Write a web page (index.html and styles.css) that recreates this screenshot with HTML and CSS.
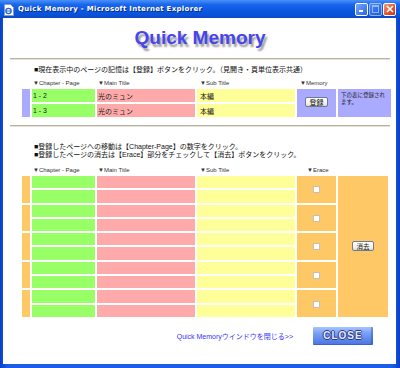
FILE: index.html
```html
<!DOCTYPE html>
<html lang="ja">
<head>
  <meta charset="UTF-8" />
  <title>Quick Memory</title>
  <link rel="stylesheet" href="styles.css">
</head>
<body>
  <div class="window">
    <div class="titlebar">
      <svg class="ie-icon" width="10" height="12" viewBox="0 0 10 12">
        <path d="M0.5 0.5h6l3 3v8h-9z" fill="#fff" stroke="#8a9ab8" stroke-width="1"/>
        <circle cx="4.5" cy="7" r="2.6" fill="none" stroke="#2a62d8" stroke-width="1.4"/>
        <path d="M2 7h5" stroke="#2a62d8" stroke-width="1"/>
      </svg>
      <span class="title-text">Quick Memory - Microsoft Internet Explorer</span>
      <div class="controls">
        <span class="ctl min"><i></i></span>
        <span class="ctl max off"><i></i></span>
        <span class="ctl close">
          <svg width="8" height="8" viewBox="0 0 8 8"><path d="M1 1L7 7M7 1L1 7" stroke="#fff" stroke-width="1.6"/></svg>
        </span>
      </div>
    </div>

    <div class="content">
      <h1>Quick Memory</h1>
      <hr>

      <p class="lead one">■現在表示中のページの記憶は【登録】ボタンをクリック。（見開き・頁単位表示共通）</p>

      <table class="memo top">
        <colgroup>
          <col style="width:8px"><col style="width:63px"><col style="width:98px">
          <col style="width:98px"><col style="width:39px"><col style="width:53px">
        </colgroup>
        <tr class="head">
          <td></td>
          <td>▼Chapter - Page</td>
          <td>▼Main Title</td>
          <td class="pad">▼Sub Title</td>
          <td class="pad">▼Memory</td>
          <td></td>
        </tr>
        <tr class="row">
          <td class="purple" rowspan="2"></td>
          <td class="green">1 - 2</td>
          <td class="pink">光のミュン</td>
          <td class="yellow">本編</td>
          <td class="purple center" rowspan="2"><button class="small-btn">登録</button></td>
          <td class="purple note" rowspan="2">下の表に登録されます。</td>
        </tr>
        <tr class="row">
          <td class="green">1 - 3</td>
          <td class="pink">光のミュン</td>
          <td class="yellow">本編</td>
        </tr>
      </table>

      <hr>

      <p class="lead two">■登録したページへの移動は【Chapter-Page】の数字をクリック。<br>■登録したページの消去は【Erace】部分をチェックして【消去】ボタンをクリック。</p>

      <table class="memo list">
        <colgroup>
          <col style="width:8px"><col style="width:63px"><col style="width:98px">
          <col style="width:98px"><col style="width:39px"><col style="width:50px">
        </colgroup>
        <tr class="head">
          <td></td>
          <td>▼Chapter - Page</td>
          <td>▼Main Title</td>
          <td class="pad">▼Sub Title</td>
          <td class="erace-head">▼Erace</td>
          <td></td>
        </tr>
        <tr class="row">
          <td class="orange" rowspan="2"></td><td class="green"></td><td class="pink"></td><td class="yellow"></td>
          <td class="orange center" rowspan="2"><input type="checkbox" class="check"></td>
          <td class="orange center" rowspan="10"><button class="small-btn erase">消去</button></td>
        </tr>
        <tr class="row"><td class="green"></td><td class="pink"></td><td class="yellow"></td></tr>
        <tr class="row">
          <td class="orange" rowspan="2"></td><td class="green"></td><td class="pink"></td><td class="yellow"></td>
          <td class="orange center" rowspan="2"><input type="checkbox" class="check"></td>
        </tr>
        <tr class="row"><td class="green"></td><td class="pink"></td><td class="yellow"></td></tr>
        <tr class="row">
          <td class="orange" rowspan="2"></td><td class="green"></td><td class="pink"></td><td class="yellow"></td>
          <td class="orange center" rowspan="2"><input type="checkbox" class="check"></td>
        </tr>
        <tr class="row"><td class="green"></td><td class="pink"></td><td class="yellow"></td></tr>
        <tr class="row">
          <td class="orange" rowspan="2"></td><td class="green"></td><td class="pink"></td><td class="yellow"></td>
          <td class="orange center" rowspan="2"><input type="checkbox" class="check"></td>
        </tr>
        <tr class="row"><td class="green"></td><td class="pink"></td><td class="yellow"></td></tr>
        <tr class="row">
          <td class="orange" rowspan="2"></td><td class="green"></td><td class="pink"></td><td class="yellow"></td>
          <td class="orange center" rowspan="2"><input type="checkbox" class="check"></td>
        </tr>
        <tr class="row"><td class="green"></td><td class="pink"></td><td class="yellow"></td></tr>
      </table>

      <div class="footer">
        <a class="close-link" href="#">Quick Memoryウインドウを閉じる&gt;&gt;</a>
        <button class="close-btn">CLOSE</button>
      </div>
    </div>
  </div>
</body>
</html>
```

FILE: styles.css
```css
body {
  margin: 0;
  background: #fff;
  font-family: "Liberation Sans", "Noto Sans CJK JP", sans-serif;
  color: #222;
}
.window {
  width: 400px;
  height: 368px;
  box-sizing: border-box;
  display: flex;
  flex-direction: column;
  background: linear-gradient(to right, #0a3fc8, #1c5ee8 2%, #1c5ee8 98%, #0a3fc8);
}
.titlebar {
  height: 18px;
  display: flex;
  align-items: center;
  padding: 0 4px 0 4px;
  background: linear-gradient(#4a92f8, #1a66ec 25%, #0a58e2 60%, #0a52d8 85%, #0c48c4);
}
.ie-icon {
  flex: none;
  margin-top: 1px;
}
.title-text {
  margin-left: 4px;
  font-family: "DejaVu Sans", sans-serif;
  font-weight: bold;
  font-size: 7px;
  letter-spacing: 0.3px;
  color: #fff;
  text-shadow: 1px 1px 0 #0a2a80;
}
.controls {
  margin-left: auto;
  display: flex;
  gap: 1px;
}
.ctl {
  width: 11px;
  height: 11px;
  border: 1px solid #fff;
  border-radius: 2px;
  background: linear-gradient(135deg, #7aa6f8, #2a64e8);
  display: flex;
  align-items: center;
  justify-content: center;
  position: relative;
}
.ctl.min i {
  position: absolute;
  left: 3px;
  bottom: 3px;
  width: 4px;
  height: 2px;
  background: #fff;
}
.ctl.off {
  opacity: 0.55;
}
.ctl.max i {
  width: 5px;
  height: 5px;
  border: 1px solid #fff;
  border-top-width: 2px;
}
.ctl.close {
  background: linear-gradient(135deg, #f0a080, #e0502a 60%, #c83a18);
}

.content {
  flex: 1;
  margin: 0 4px 4px 3px;
  padding: 0 6px 0 7px;
  background: #fff;
}
h1 {
  margin: 0;
  padding-top: 8px;
  height: 26px;
  line-height: 24px;
  text-align: center;
  font-size: 19px;
  font-weight: bold;
  color: #4646ee;
  text-shadow: 2px 3px 2px #9a9a9a;
}
hr {
  margin: 6px 0 0 0;
  height: 0;
  border: 0;
  border-top: 1px solid #b8b4a0;
  border-bottom: 1px solid #e4e2d6;
}
.lead {
  margin: 0 0 0 24px;
  font-size: 7px;
  line-height: 10px;
  color: #111;
}
.lead.one {
  margin-top: 5px;
}
.lead.two {
  margin-top: 16px;
  line-height: 8px;
}

.memo {
  table-layout: fixed;
  border-collapse: separate;
  border-spacing: 2px;
  margin-left: 10px;
}
.memo.top {
  width: 373px;
  margin-top: 1px;
}
.memo.list {
  width: 370px;
  margin-top: 4px;
}
.memo td {
  padding: 0;
  font-size: 7px;
  white-space: nowrap;
  overflow: hidden;
}
.memo .head {
  height: 9px;
}
.memo .head td {
  font-size: 6px;
  color: #333;
  vertical-align: bottom;
  padding-left: 1px;
  line-height: 8px;
}
.memo .head td.pad {
  padding-left: 3px;
}
.memo .head td.erace-head {
  padding-left: 10px;
}
.memo.top .row {
  height: 13px;
}
.memo.list .row {
  height: 12.3px;
}
.green {
  background: #99ff66;
  padding-left: 1px !important;
}
.pink {
  background: #ffaaaa;
  padding-left: 1px !important;
}
.yellow {
  background: #ffff99;
  padding-left: 3px !important;
}
.purple {
  background: #aaaaff;
}
.orange {
  background: #ffc866;
}
.center {
  text-align: center;
  vertical-align: middle;
}
.memo td.note {
  vertical-align: top;
  white-space: normal;
  font-size: 5.5px;
  line-height: 7px;
  padding: 3px 2px 0 3px;
}
.small-btn {
  width: 23px;
  height: 10px;
  padding: 0;
  margin: 0 0 2px 0;
  font-family: "Noto Sans CJK JP", sans-serif;
  font-size: 7px;
  line-height: 8px;
  color: #111;
  border: 1px solid #6a7a98;
  border-radius: 2px;
  background: linear-gradient(#ffffff, #f2f1ea 70%, #dcd8c8);
}
.small-btn.erase {
  width: 22px;
  height: 10px;
  margin: 0;
  font-size: 6.5px;
}
.check {
  appearance: none;
  width: 7px;
  height: 7px;
  margin: 0;
  background: #fff;
  border: 1px solid #c8c0b0;
  vertical-align: middle;
}

.footer {
  margin-top: 8px;
  height: 18px;
  display: flex;
  align-items: center;
  justify-content: flex-end;
  gap: 20px;
  padding-right: 17px;
}
.close-link {
  font-size: 7px;
  color: #3333ff;
  text-decoration: none;
  margin-top: 1px;
}
.close-btn {
  width: 60px;
  height: 18px;
  padding: 0;
  border: 0;
  border-radius: 1px;
  background: linear-gradient(#a8c4ff, #7aa0f4 35%, #5a84ea 75%, #4c74dc);
  box-shadow: inset -2px -1px 0 rgba(30, 60, 160, 0.35);
  font-family: "Liberation Sans", sans-serif;
  font-weight: bold;
  font-size: 10px;
  letter-spacing: 1px;
  color: #e8ecff;
  text-shadow: -1px 0 #2a3a8a, 1px 0 #2a3a8a, 0 -1px #2a3a8a, 0 1px #2a3a8a;
}
```
